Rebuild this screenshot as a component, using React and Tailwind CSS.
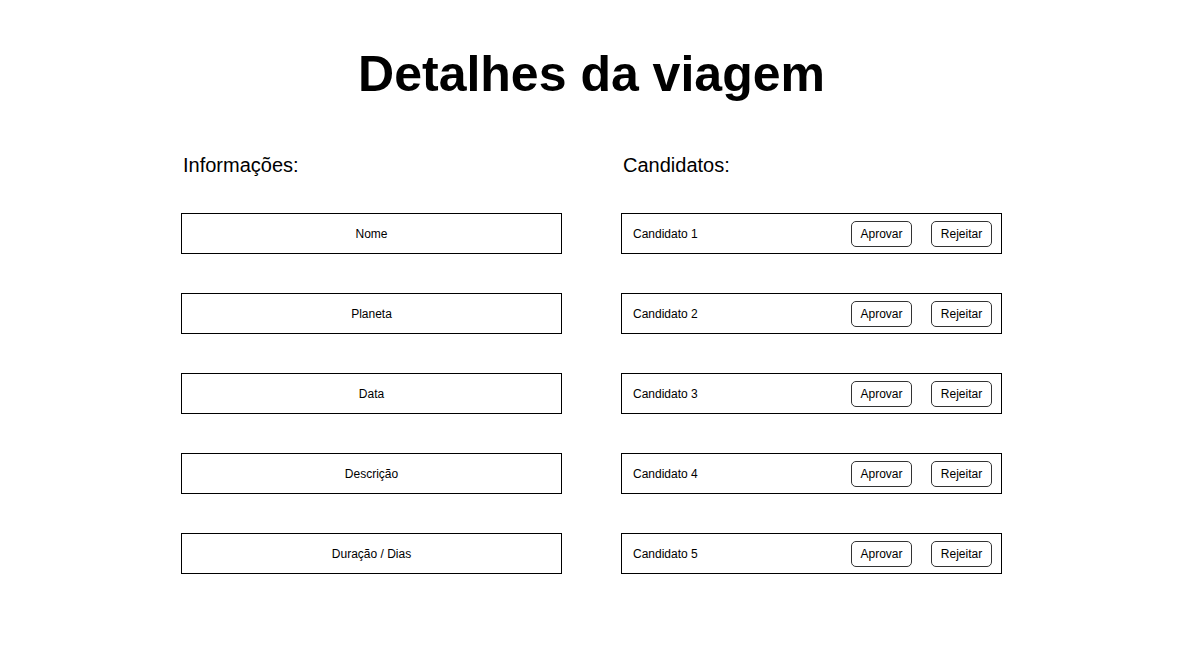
const infos = ['Nome', 'Planeta', 'Data', 'Descrição', 'Duração / Dias']
const candidatos = ['Candidato 1', 'Candidato 2', 'Candidato 3', 'Candidato 4', 'Candidato 5']

export default function App() {
  return (
    <div className="w-full h-[652px] bg-white text-black font-['Liberation_Sans',Arial,sans-serif]">
      <div className="w-[821px] ml-[181px]">
        {/* Title */}
        <h1 className="pt-[49px] text-[50px] leading-[50px] font-bold text-center">Detalhes da viagem</h1>

        <div className="mt-[56px] flex gap-[59px]">
          {/* Informações */}
          <div className="w-[381px]">
            <h2 className="text-[20px] leading-[20px] pl-[2px]">Informações:</h2>
            <div className="mt-[38px] flex flex-col gap-[39px]">
              {infos.map(item => (
                <div
                  key={item}
                  className="h-[41px] border border-black flex items-center justify-center text-[12px]"
                >
                  {item}
                </div>
              ))}
            </div>
          </div>

          {/* Candidatos */}
          <div className="w-[381px]">
            <h2 className="text-[20px] leading-[20px] pl-[2px]">Candidatos:</h2>
            <div className="mt-[38px] flex flex-col gap-[39px]">
              {candidatos.map(c => (
                <div
                  key={c}
                  className="h-[41px] border border-black flex items-center pl-[11px] pr-[9px] text-[12px]"
                >
                  <span className="flex-1">{c}</span>
                  <button className="w-[61px] h-[26px] border border-[#333] rounded-[5px] text-[12px] bg-white">
                    Aprovar
                  </button>
                  <button className="ml-[19px] w-[61px] h-[26px] border border-[#333] rounded-[5px] text-[12px] bg-white">
                    Rejeitar
                  </button>
                </div>
              ))}
            </div>
          </div>
        </div>
      </div>
    </div>
  )
}
